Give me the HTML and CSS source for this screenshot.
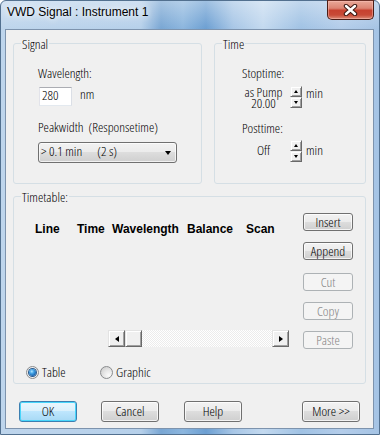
FILE: index.html
```html
<!DOCTYPE html>
<html>
<head>
<meta charset="utf-8">
<title>VWD Signal : Instrument 1</title>
<link rel="stylesheet" href="styles.css">
</head>
<body>
<div class="window">
  <div class="titlebar">
    <span class="title">VWD Signal : Instrument 1</span>
    <div class="close-btn">
      <svg width="15" height="12" viewBox="0 0 15 12">
        <path d="M3 2 L12 10 M12 2 L3 10" stroke="#3b1711" stroke-width="4.4" stroke-linecap="round"/>
        <path d="M3 2 L12 10 M12 2 L3 10" stroke="#ffffff" stroke-width="2.4" stroke-linecap="round"/>
      </svg>
    </div>
  </div>
  <div class="client">
    <div class="top-row">
      <section class="group group-signal">
        <div class="group-title">Signal</div>
        <div class="group-body signal-body">
          <div class="field-label label-first">Wavelength:</div>
          <div class="input-row">
            <div class="textbox">280</div>
            <span class="unit unit-nm">nm</span>
          </div>
          <div class="field-label label-peak">Peakwidth&nbsp; (Responsetime)</div>
          <div class="combo">
            <span class="combo-text">&gt; 0.1 min      (2 s)</span>
            <span class="combo-arrow"></span>
          </div>
        </div>
      </section>
      <section class="group group-time">
        <div class="group-title">Time</div>
        <div class="group-body time-body">
          <div class="field-label label-first">Stoptime:</div>
          <div class="spin-row spin-row-stop">
            <div class="spin-value two-line"><div>as Pump</div><div>20.00</div></div>
            <div class="spin">
              <div class="spin-btn"><span class="tri-up"></span></div>
              <div class="spin-btn"><span class="tri-down"></span></div>
            </div>
            <span class="unit unit-min">min</span>
          </div>
          <div class="field-label label-post">Posttime:</div>
          <div class="spin-row spin-row-post">
            <div class="spin-value one-line">Off</div>
            <div class="spin">
              <div class="spin-btn"><span class="tri-up"></span></div>
              <div class="spin-btn"><span class="tri-down"></span></div>
            </div>
            <span class="unit unit-min unit-low">min</span>
          </div>
        </div>
      </section>
    </div>

    <section class="group group-timetable">
      <div class="group-title">Timetable:</div>
      <div class="tt-body">
        <div class="tt-left">
          <div class="tt-header">
            <span>Line</span>
            <span>Time</span>
            <span>Wavelength</span>
            <span>Balance</span>
            <span>Scan</span>
          </div>
          <div class="scrollbar">
            <div class="sb-btn"><span class="tri-left"></span></div>
            <div class="sb-btn sb-thumb"></div>
            <div class="sb-track"></div>
            <div class="sb-btn"><span class="tri-right"></span></div>
          </div>
        </div>
        <div class="tt-buttons">
          <div class="btn btn-small">Insert</div>
          <div class="btn btn-small">Append</div>
          <div class="btn btn-small btn-disabled btn-cut">Cut</div>
          <div class="btn btn-small btn-disabled">Copy</div>
          <div class="btn btn-small btn-disabled">Paste</div>
        </div>
      </div>
      <div class="radio-row">
        <div class="radio-item radio-item-first">
          <span class="radio checked"></span>
          <span class="radio-label">Table</span>
        </div>
        <div class="radio-item">
          <span class="radio"></span>
          <span class="radio-label">Graphic</span>
        </div>
      </div>
    </section>

    <div class="footer">
      <div class="btn btn-footer btn-default">OK</div>
      <div class="btn btn-footer btn-cancel">Cancel</div>
      <div class="btn btn-footer btn-help">Help</div>
      <div class="btn btn-footer btn-more">More &gt;&gt;</div>
    </div>
  </div>
</div>
</body>
</html>
```
FILE: styles.css
```css
* {
  box-sizing: border-box;
}

html,
body {
  margin: 0;
  padding: 0;
}

body {
  width: 380px;
  height: 435px;
  overflow: hidden;
  background: #ffffff;
  font-family: "Open Sans", "Liberation Sans", sans-serif;
  font-stretch: condensed;
  font-weight: 300;
  font-size: 13.5px;
  color: #000;
}

/* ---------- window frame ---------- */
.window {
  width: 380px;
  height: 435px;
  display: flex;
  flex-direction: column;
  border: 1px solid #52708f;
  border-radius: 6px 6px 0 0;
  padding: 0 5px 5px 4px;
  background:
    linear-gradient(180deg, rgba(255, 255, 255, 0.35) 0, rgba(255, 255, 255, 0) 28px),
    linear-gradient(90deg, #bed5ec 0, #b6d0ea 140px, #79a6d3 160px, #8cb6de 182px, #6c9fd2 205px, #a7c6e6 232px, #c3d9ef 262px, #a0c2e4 300px, #b4cdea 340px, #a4c3e4 380px);
}

.titlebar {
  height: 28px;
  flex: none;
  display: flex;
  align-items: flex-start;
  justify-content: space-between;
}

.title {
  font-family: "Liberation Sans", sans-serif;
  font-stretch: normal;
  font-weight: normal;
  font-size: 12px;
  line-height: 15px;
  padding: 4px 0 0 2px;
  color: #000;
  text-shadow: 0 0 6px rgba(255, 255, 255, 0.95), 0 0 10px rgba(255, 255, 255, 0.8);
}

.close-btn {
  width: 47px;
  height: 20px;
  margin-top: -1px;
  border: 1px solid #4a1d16;
  border-top-color: #6b3027;
  border-radius: 0 0 5px 5px;
  background: linear-gradient(180deg, #e9a898 0, #dc8473 40%, #c7412f 52%, #c84a37 78%, #dc8c78 100%);
  box-shadow: inset 0 0 0 1px rgba(255, 200, 190, 0.45);
  display: flex;
  align-items: center;
  justify-content: center;
}

/* ---------- client area ---------- */
.client {
  flex: 1;
  border: 1px solid #7d93ad;
  background: #f0f0f0;
  padding: 0 7px;
  display: flex;
  flex-direction: column;
}

.top-row {
  margin-top: 13px;
  display: flex;
  gap: 12px;
}

.group {
  border: 1px solid #d5dfe5;
  border-radius: 3px;
}

.group-title {
  margin: -7px 0 0 7px;
  padding: 0 1px;
  width: max-content;
  line-height: 15px;
  background: #f0f0f0;
}

.group-signal {
  width: 189px;
  height: 141px;
}

.group-time {
  width: 152px;
  height: 141px;
}

.signal-body {
  padding-left: 24px;
}

.time-body {
  padding-left: 27px;
}

.field-label {
  line-height: 15px;
  white-space: nowrap;
}

.label-first {
  margin-top: 14px;
}

.label-peak {
  margin-top: 14px;
}

.label-post {
  margin-top: 12px;
}

/* ---------- wavelength input ---------- */
.input-row {
  margin-top: 6px;
  display: flex;
  align-items: flex-start;
}

.textbox {
  width: 33px;
  height: 19px;
  margin-left: 1px;
  padding-left: 2px;
  line-height: 15px;
  background: #fff;
  border: 1px solid;
  border-color: #abadb3 #dbdfe6 #e3e9ef #e2e3ea;
}

.unit {
  line-height: 15px;
}

.unit-nm {
  margin-left: 8px;
}

/* ---------- combo ---------- */
.combo {
  margin-top: 7px;
  width: 139px;
  height: 21px;
  border: 1px solid #707070;
  border-radius: 3px;
  background: linear-gradient(180deg, #f2f2f2 0, #ebebeb 50%, #dddddd 50%, #cfcfcf 100%);
  box-shadow: inset 0 0 0 1px rgba(255, 255, 255, 0.7);
  display: flex;
  align-items: flex-start;
  justify-content: space-between;
  padding: 0 5px 0 2px;
}

.combo-text {
  white-space: pre;
  line-height: 16px;
}

.combo-arrow {
  align-self: center;
  width: 0;
  height: 4px;
  border-left: 3.5px solid transparent;
  border-right: 3.5px solid transparent;
  border-top: 4px solid #000;
  margin-top: 1px;
}

/* ---------- spinners ---------- */
.spin-row {
  display: flex;
  align-items: flex-start;
}

.spin-row-stop {
  margin-top: 5px;
}

.spin-row-post {
  margin-top: 4px;
}

.spin-value {
  width: 41px;
  margin-left: 1px;
  text-align: center;
  white-space: nowrap;
}

.two-line {
  line-height: 11px;
  margin-top: 1px;
}

.one-line {
  line-height: 15px;
  margin-top: 3px;
}

.spin {
  width: 12px;
  margin-left: 6px;
  display: flex;
  flex-direction: column;
}

.spin-btn {
  height: 11px;
  background: #f0f0f0;
  border: 1px solid;
  border-color: #f0f0f0 #696969 #696969 #f0f0f0;
  box-shadow: inset 1px 1px 0 #fff, inset -1px -1px 0 #a0a0a0;
  display: flex;
  align-items: center;
  justify-content: center;
}

.tri-up {
  width: 1px;
  height: 0;
  border-left: 2px solid transparent;
  border-right: 2px solid transparent;
  border-bottom: 3px solid #000;
}

.tri-down {
  width: 1px;
  height: 0;
  border-left: 2px solid transparent;
  border-right: 2px solid transparent;
  border-top: 3px solid #000;
}

.unit-min {
  margin-left: 4px;
}

.unit-low {
  margin-top: 3px;
}

/* ---------- timetable ---------- */
.group-timetable {
  margin-top: 12px;
  padding-bottom: 3px;
}

.tt-body {
  margin-top: 8px;
  display: flex;
}

.tt-left {
  flex: 1;
  display: flex;
  flex-direction: column;
}

.tt-header {
  margin-top: 9px;
  padding-left: 21px;
  display: grid;
  grid-template-columns: 42px 35px 75px 59px auto;
  font-family: "Liberation Sans", sans-serif;
  font-stretch: normal;
  font-weight: bold;
  font-size: 12px;
  line-height: 14px;
  white-space: nowrap;
}

.scrollbar {
  margin-top: auto;
  margin-left: 94px;
  margin-bottom: 2px;
  width: 181px;
  height: 17px;
  display: flex;
}

.sb-btn {
  width: 17px;
  height: 17px;
  flex: none;
  background: #f0f0f0;
  border: 1px solid;
  border-color: #e3e3e3 #696969 #696969 #e3e3e3;
  box-shadow: inset 1px 1px 0 #fff, inset -1px -1px 0 #a0a0a0;
  display: flex;
  align-items: center;
  justify-content: center;
}

.sb-track {
  flex: 1;
  background: repeating-conic-gradient(#ffffff 0 25%, #ececec 0 50%) 0 0 / 2px 2px;
}

.tri-left {
  width: 0;
  height: 1px;
  border-top: 3px solid transparent;
  border-bottom: 3px solid transparent;
  border-right: 4px solid #000;
}

.tri-right {
  width: 0;
  height: 1px;
  border-top: 3px solid transparent;
  border-bottom: 3px solid transparent;
  border-left: 4px solid #000;
}

.tt-buttons {
  width: 50px;
  margin-right: 12px;
  display: flex;
  flex-direction: column;
  gap: 11px;
}

.btn-cut {
  margin-top: 2px;
}

.radio-row {
  margin-top: 16px;
  padding-left: 12px;
  display: flex;
  line-height: 15px;
}

.radio-item {
  display: flex;
  align-items: center;
}

.radio-item-first {
  width: 74px;
}

.radio {
  width: 13px;
  height: 13px;
  border-radius: 50%;
  border: 1px solid #8a8c8e;
  background: radial-gradient(circle at 70% 75%, #fbfbfb 0, #e6e6e6 45%, #c6c6c6 100%);
  display: flex;
  align-items: center;
  justify-content: center;
}

.radio.checked {
  background: radial-gradient(circle, #ffffff 0, #f2f2f2 60%, #dcdcdc 100%);
}

.radio.checked::after {
  content: "";
  width: 7px;
  height: 7px;
  border-radius: 50%;
  background: radial-gradient(circle at 40% 35%, #b5e6ff 0, #49a9ea 30%, #1a68b4 70%, #0d4786 100%);
  box-shadow: 0 0 0 1px #29598c;
}

.radio-label {
  margin-left: 3px;
}

/* ---------- buttons ---------- */
.btn {
  border: 1px solid #707070;
  border-radius: 3px;
  background: linear-gradient(180deg, #f2f2f2 0, #ebebeb 50%, #dddddd 50%, #cfcfcf 100%);
  box-shadow: inset 0 0 0 1px rgba(255, 255, 255, 0.75);
  text-align: center;
  white-space: nowrap;
}

.btn-small {
  height: 18px;
  line-height: 16px;
}

.btn-disabled {
  border-color: #adb2b5;
  background: #f4f4f4;
  box-shadow: none;
  color: #838383;
}

.footer {
  margin-top: 17px;
  display: flex;
}

.btn-footer {
  width: 58px;
  height: 21px;
  line-height: 19px;
}

.btn-default {
  margin-left: 6px;
  border-color: #3c7fb1;
  background: linear-gradient(180deg, #eaf6fd 0, #d9f0fc 50%, #bee6fd 50%, #a7d9f5 100%);
  box-shadow: inset 0 0 0 1px #48d6fb;
}

.btn-cancel {
  margin-left: 24px;
}

.btn-help {
  margin-left: 25px;
}

.btn-more {
  margin-left: auto;
  margin-right: 6px;
}
```
